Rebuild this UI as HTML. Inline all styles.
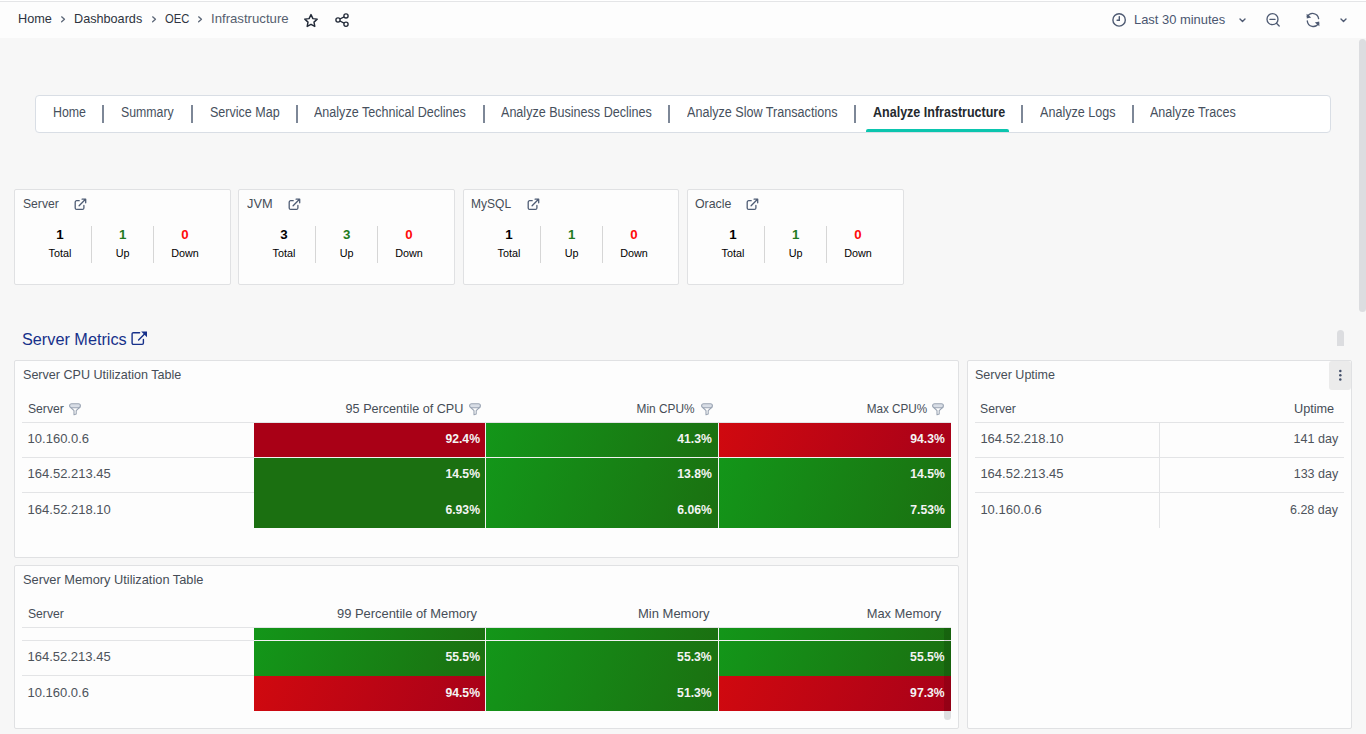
<!DOCTYPE html>
<html><head><meta charset="utf-8"><style>
html,body{margin:0;padding:0;width:1366px;height:734px;overflow:hidden;background:#f7f7f7;font-family:"Liberation Sans",sans-serif;}
.t{position:absolute;white-space:nowrap;}
.b{position:absolute;}
</style></head><body>
<div class="b" style="left:0px;top:0px;width:1366px;height:1px;background:#ffffff"></div>
<div class="b" style="left:0px;top:1px;width:1366px;height:1px;background:#e4e5e7"></div>
<div class="b" style="left:0px;top:2px;width:1366px;height:36px;background:#fdfdfd"></div>
<div class="t" style="top:12.10px;font-size:13px;line-height:13px;color:#2e3440;transform:scaleX(0.9776);left:18.20px;transform-origin:0 0;">Home</div>
<div class="t" style="top:12.10px;font-size:13px;line-height:13px;color:#2e3440;transform:scaleX(0.9730);left:74.10px;transform-origin:0 0;">Dashboards</div>
<div class="t" style="top:12.10px;font-size:13px;line-height:13px;color:#2e3440;transform:scaleX(0.8626);left:164.60px;transform-origin:0 0;">OEC</div>
<div class="t" style="top:12.10px;font-size:13px;line-height:13px;color:#56606f;transform:scaleX(1.0133);left:210.80px;transform-origin:0 0;">Infrastructure</div>
<svg class="b" style="left:61px;top:15px" width="5" height="9" viewBox="0 0 5 9"><path d="M0.65 1.85 L3.45 4.3 L0.65 6.75" fill="none" stroke="#5b6677" stroke-width="1.3" stroke-linecap="round" stroke-linejoin="round"/></svg>
<svg class="b" style="left:152px;top:15px" width="5" height="9" viewBox="0 0 5 9"><path d="M0.65 1.85 L3.45 4.3 L0.65 6.75" fill="none" stroke="#5b6677" stroke-width="1.3" stroke-linecap="round" stroke-linejoin="round"/></svg>
<svg class="b" style="left:198px;top:15px" width="5" height="9" viewBox="0 0 5 9"><path d="M0.65 1.85 L3.45 4.3 L0.65 6.75" fill="none" stroke="#5b6677" stroke-width="1.3" stroke-linecap="round" stroke-linejoin="round"/></svg>
<svg class="b" style="left:303px;top:13px" width="16" height="15" viewBox="0 0 16 15"><path d="M8 1.6 L9.9 5.6 L14.2 6.1 L11 9.1 L11.8 13.4 L8 11.3 L4.2 13.4 L5 9.1 L1.8 6.1 L6.1 5.6 Z" fill="none" stroke="#222a38" stroke-width="1.45" stroke-linejoin="round"/></svg>
<svg class="b" style="left:334px;top:12px" width="16" height="16" viewBox="0 0 16 16"><g fill="none" stroke="#222a38" stroke-width="1.35"><circle cx="4" cy="8" r="2.1"/><circle cx="12" cy="3.9" r="2.1"/><circle cx="12" cy="12.2" r="2.1"/><path d="M5.9 7 L10.1 4.9 M5.9 9 L10.1 11.2"/></g></svg>
<svg class="b" style="left:1111px;top:13px" width="16" height="14" viewBox="0 0 16 14"><g fill="none" stroke="#4e5a72" stroke-width="1.4"><circle cx="8.1" cy="6.9" r="6.2"/><path d="M8.3 3.6 V7.3 H6.1" stroke-linecap="round"/></g></svg>
<div class="t" style="top:12.90px;font-size:13px;line-height:13px;color:#4a5670;transform:scaleX(0.9927);left:1134.40px;transform-origin:0 0;">Last 30 minutes</div>
<svg class="b" style="left:1238.5px;top:17.5px" width="7" height="5" viewBox="0 0 7 5"><path d="M1 1 L3.5 3.5 L6 1" fill="none" stroke="#4e5a72" stroke-width="1.4" stroke-linecap="round" stroke-linejoin="round"/></svg>
<svg class="b" style="left:1339.6px;top:17.5px" width="7" height="5" viewBox="0 0 7 5"><path d="M1 1 L3.5 3.5 L6 1" fill="none" stroke="#4e5a72" stroke-width="1.4" stroke-linecap="round" stroke-linejoin="round"/></svg>
<svg class="b" style="left:1265px;top:12px" width="16" height="16" viewBox="0 0 16 16"><g fill="none" stroke="#4e5a72" stroke-width="1.3" stroke-linecap="round"><circle cx="7.5" cy="7.2" r="5.5"/><path d="M4.9 7.3 H10.1 M11.5 11.3 L14.2 14"/></g></svg>
<svg class="b" style="left:1305px;top:12px" width="16" height="16" viewBox="0 0 16 16"><g fill="none" stroke="#4e5a72" stroke-width="1.35" stroke-linecap="round"><path d="M2.4 4.6 A6 6 0 0 1 13.6 6.6"/><path d="M13.6 11.2 A6 6 0 0 1 2.3 9"/></g><path d="M1.6 1.8 L1.8 6.4 L6.2 5.6 Z M14.4 14.2 L14.2 9.6 L9.8 10.4 Z" fill="#4e5a72"/></svg>
<div class="b" style="left:0px;top:38px;width:1366px;height:696px;background:#f7f7f7"></div>
<div class="b" style="left:1359px;top:39px;width:7px;height:273px;background:#dcdde0;border-radius:4px"></div>
<div class="b" style="left:35px;top:95px;width:1296px;height:38px;background:#ffffff;border:1px solid #d9dee5;border-radius:4px;box-sizing:border-box"></div>
<div class="t" style="top:104.55px;font-size:14px;line-height:14px;color:#46505d;transform:scaleX(0.8837);left:52.70px;transform-origin:0 0;">Home</div>
<div class="t" style="top:104.55px;font-size:14px;line-height:14px;color:#46505d;transform:scaleX(0.8799);left:121.20px;transform-origin:0 0;">Summary</div>
<div class="t" style="top:104.55px;font-size:14px;line-height:14px;color:#46505d;transform:scaleX(0.8946);left:209.70px;transform-origin:0 0;">Service Map</div>
<div class="t" style="top:104.55px;font-size:14px;line-height:14px;color:#46505d;transform:scaleX(0.8962);left:314.20px;transform-origin:0 0;">Analyze Technical Declines</div>
<div class="t" style="top:104.55px;font-size:14px;line-height:14px;color:#46505d;transform:scaleX(0.8972);left:501.10px;transform-origin:0 0;">Analyze Business Declines</div>
<div class="t" style="top:104.55px;font-size:14px;line-height:14px;color:#46505d;transform:scaleX(0.8996);left:686.70px;transform-origin:0 0;">Analyze Slow Transactions</div>
<div class="t" style="top:104.55px;font-size:14px;line-height:14px;color:#24292e;font-weight:bold;transform:scaleX(0.8944);left:872.50px;transform-origin:0 0;">Analyze Infrastructure</div>
<div class="t" style="top:104.55px;font-size:14px;line-height:14px;color:#46505d;transform:scaleX(0.8983);left:1039.50px;transform-origin:0 0;">Analyze Logs</div>
<div class="t" style="top:104.55px;font-size:14px;line-height:14px;color:#46505d;transform:scaleX(0.8965);left:1150.20px;transform-origin:0 0;">Analyze Traces</div>
<div class="b" style="left:102px;top:105px;width:2px;height:18px;background:#7d8797"></div>
<div class="b" style="left:191px;top:105px;width:2px;height:18px;background:#7d8797"></div>
<div class="b" style="left:296px;top:105px;width:2px;height:18px;background:#7d8797"></div>
<div class="b" style="left:483px;top:105px;width:2px;height:18px;background:#7d8797"></div>
<div class="b" style="left:668px;top:105px;width:2px;height:18px;background:#7d8797"></div>
<div class="b" style="left:854px;top:105px;width:2px;height:18px;background:#7d8797"></div>
<div class="b" style="left:1021px;top:105px;width:2px;height:18px;background:#7d8797"></div>
<div class="b" style="left:1132px;top:105px;width:2px;height:18px;background:#7d8797"></div>
<div class="b" style="left:866px;top:129px;width:143px;height:3px;background:#0bc5ae;border-radius:2px 2px 0 0"></div>
<div class="b" style="left:14px;top:189px;width:217px;height:96px;background:#fdfdfd;border:1px solid #e0e1e3;border-radius:2px;box-sizing:border-box"></div>
<div class="t" style="top:197.20px;font-size:13px;line-height:13px;color:#464d57;transform:scaleX(0.9350);left:22.70px;transform-origin:0 0;">Server</div>
<svg class="b" style="left:72.7px;top:196.6px" width="14" height="14" viewBox="0 0 14 14"><g fill="none" stroke="#4f5d75" stroke-width="1.3" stroke-linecap="round" stroke-linejoin="round"><path d="M6.2 3.7 H3.7 A1.5 1.5 0 0 0 2.2 5.2 V10.9 A1.5 1.5 0 0 0 3.7 12.4 H9.4 A1.5 1.5 0 0 0 10.9 10.9 V8.4"/><path d="M6.1 8.7 L12.5 2.3 M9.1 2.2 H12.7 V5.8"/></g></svg>
<div class="t" style="top:227.54px;font-size:13.3px;line-height:13.3px;color:#000000;font-weight:bold;left:56.30px;transform-origin:3.70px 0;">1</div>
<div class="t" style="top:247.66px;font-size:10.8px;line-height:10.8px;color:#000000;left:48.59px;transform-origin:11.41px 0;">Total</div>
<div class="t" style="top:227.54px;font-size:13.3px;line-height:13.3px;color:#217a21;font-weight:bold;left:119.00px;transform-origin:3.70px 0;">1</div>
<div class="t" style="top:247.66px;font-size:10.8px;line-height:10.8px;color:#000000;left:115.80px;transform-origin:6.90px 0;">Up</div>
<div class="t" style="top:227.54px;font-size:13.3px;line-height:13.3px;color:#ff0a0a;font-weight:bold;left:181.30px;transform-origin:3.70px 0;">0</div>
<div class="t" style="top:247.66px;font-size:10.8px;line-height:10.8px;color:#000000;left:171.19px;transform-origin:13.81px 0;">Down</div>
<div class="b" style="left:91px;top:226px;width:1px;height:37px;background:#d6d6d6"></div>
<div class="b" style="left:153px;top:226px;width:1px;height:37px;background:#d6d6d6"></div>
<div class="b" style="left:238px;top:189px;width:217px;height:96px;background:#fdfdfd;border:1px solid #e0e1e3;border-radius:2px;box-sizing:border-box"></div>
<div class="t" style="top:197.20px;font-size:13px;line-height:13px;color:#464d57;transform:scaleX(0.9846);left:246.80px;transform-origin:0 0;">JVM</div>
<svg class="b" style="left:287.0px;top:196.6px" width="14" height="14" viewBox="0 0 14 14"><g fill="none" stroke="#4f5d75" stroke-width="1.3" stroke-linecap="round" stroke-linejoin="round"><path d="M6.2 3.7 H3.7 A1.5 1.5 0 0 0 2.2 5.2 V10.9 A1.5 1.5 0 0 0 3.7 12.4 H9.4 A1.5 1.5 0 0 0 10.9 10.9 V8.4"/><path d="M6.1 8.7 L12.5 2.3 M9.1 2.2 H12.7 V5.8"/></g></svg>
<div class="t" style="top:227.54px;font-size:13.3px;line-height:13.3px;color:#000000;font-weight:bold;left:280.30px;transform-origin:3.70px 0;">3</div>
<div class="t" style="top:247.66px;font-size:10.8px;line-height:10.8px;color:#000000;left:272.59px;transform-origin:11.41px 0;">Total</div>
<div class="t" style="top:227.54px;font-size:13.3px;line-height:13.3px;color:#217a21;font-weight:bold;left:343.00px;transform-origin:3.70px 0;">3</div>
<div class="t" style="top:247.66px;font-size:10.8px;line-height:10.8px;color:#000000;left:339.80px;transform-origin:6.90px 0;">Up</div>
<div class="t" style="top:227.54px;font-size:13.3px;line-height:13.3px;color:#ff0a0a;font-weight:bold;left:405.30px;transform-origin:3.70px 0;">0</div>
<div class="t" style="top:247.66px;font-size:10.8px;line-height:10.8px;color:#000000;left:395.19px;transform-origin:13.81px 0;">Down</div>
<div class="b" style="left:315px;top:226px;width:1px;height:37px;background:#d6d6d6"></div>
<div class="b" style="left:377px;top:226px;width:1px;height:37px;background:#d6d6d6"></div>
<div class="b" style="left:463px;top:189px;width:216px;height:96px;background:#fdfdfd;border:1px solid #e0e1e3;border-radius:2px;box-sizing:border-box"></div>
<div class="t" style="top:197.20px;font-size:13px;line-height:13px;color:#464d57;transform:scaleX(0.9252);left:471.10px;transform-origin:0 0;">MySQL</div>
<svg class="b" style="left:525.5px;top:196.6px" width="14" height="14" viewBox="0 0 14 14"><g fill="none" stroke="#4f5d75" stroke-width="1.3" stroke-linecap="round" stroke-linejoin="round"><path d="M6.2 3.7 H3.7 A1.5 1.5 0 0 0 2.2 5.2 V10.9 A1.5 1.5 0 0 0 3.7 12.4 H9.4 A1.5 1.5 0 0 0 10.9 10.9 V8.4"/><path d="M6.1 8.7 L12.5 2.3 M9.1 2.2 H12.7 V5.8"/></g></svg>
<div class="t" style="top:227.54px;font-size:13.3px;line-height:13.3px;color:#000000;font-weight:bold;left:505.30px;transform-origin:3.70px 0;">1</div>
<div class="t" style="top:247.66px;font-size:10.8px;line-height:10.8px;color:#000000;left:497.59px;transform-origin:11.41px 0;">Total</div>
<div class="t" style="top:227.54px;font-size:13.3px;line-height:13.3px;color:#217a21;font-weight:bold;left:568.00px;transform-origin:3.70px 0;">1</div>
<div class="t" style="top:247.66px;font-size:10.8px;line-height:10.8px;color:#000000;left:564.80px;transform-origin:6.90px 0;">Up</div>
<div class="t" style="top:227.54px;font-size:13.3px;line-height:13.3px;color:#ff0a0a;font-weight:bold;left:630.30px;transform-origin:3.70px 0;">0</div>
<div class="t" style="top:247.66px;font-size:10.8px;line-height:10.8px;color:#000000;left:620.19px;transform-origin:13.81px 0;">Down</div>
<div class="b" style="left:540px;top:226px;width:1px;height:37px;background:#d6d6d6"></div>
<div class="b" style="left:602px;top:226px;width:1px;height:37px;background:#d6d6d6"></div>
<div class="b" style="left:687px;top:189px;width:217px;height:96px;background:#fdfdfd;border:1px solid #e0e1e3;border-radius:2px;box-sizing:border-box"></div>
<div class="t" style="top:197.20px;font-size:13px;line-height:13px;color:#464d57;transform:scaleX(0.9507);left:695.00px;transform-origin:0 0;">Oracle</div>
<svg class="b" style="left:745.3px;top:196.6px" width="14" height="14" viewBox="0 0 14 14"><g fill="none" stroke="#4f5d75" stroke-width="1.3" stroke-linecap="round" stroke-linejoin="round"><path d="M6.2 3.7 H3.7 A1.5 1.5 0 0 0 2.2 5.2 V10.9 A1.5 1.5 0 0 0 3.7 12.4 H9.4 A1.5 1.5 0 0 0 10.9 10.9 V8.4"/><path d="M6.1 8.7 L12.5 2.3 M9.1 2.2 H12.7 V5.8"/></g></svg>
<div class="t" style="top:227.54px;font-size:13.3px;line-height:13.3px;color:#000000;font-weight:bold;left:729.30px;transform-origin:3.70px 0;">1</div>
<div class="t" style="top:247.66px;font-size:10.8px;line-height:10.8px;color:#000000;left:721.59px;transform-origin:11.41px 0;">Total</div>
<div class="t" style="top:227.54px;font-size:13.3px;line-height:13.3px;color:#217a21;font-weight:bold;left:792.00px;transform-origin:3.70px 0;">1</div>
<div class="t" style="top:247.66px;font-size:10.8px;line-height:10.8px;color:#000000;left:788.80px;transform-origin:6.90px 0;">Up</div>
<div class="t" style="top:227.54px;font-size:13.3px;line-height:13.3px;color:#ff0a0a;font-weight:bold;left:854.30px;transform-origin:3.70px 0;">0</div>
<div class="t" style="top:247.66px;font-size:10.8px;line-height:10.8px;color:#000000;left:844.19px;transform-origin:13.81px 0;">Down</div>
<div class="b" style="left:764px;top:226px;width:1px;height:37px;background:#d6d6d6"></div>
<div class="b" style="left:826px;top:226px;width:1px;height:37px;background:#d6d6d6"></div>
<div class="t" style="top:332.16px;font-size:16px;line-height:16px;color:#16308a;transform:scaleX(1.0153);left:21.60px;transform-origin:0 0;">Server Metrics</div>
<svg class="b" style="left:130px;top:330px" width="18" height="16" viewBox="0 0 18 16"><g fill="none" stroke="#16308a" stroke-width="1.4" stroke-linecap="round" stroke-linejoin="round"><path d="M9.6 2.7 H3.4 A1.3 1.3 0 0 0 2.1 4 V13.1 A1.3 1.3 0 0 0 3.4 14.4 H12.1 A1.3 1.3 0 0 0 13.4 13.1 V9.4"/><path d="M8.6 10 L15.3 3.2"/></g><path d="M11.2 1.4 H17 V7.2 Z" fill="#16308a"/></svg>
<div class="b" style="left:1337px;top:330px;width:7px;height:16px;background:#dcdde0;border-radius:3.5px 3.5px 0 0"></div>
<div class="b" style="left:14px;top:360px;width:945px;height:198px;background:#fdfdfd;border:1px solid #e0e1e3;border-radius:2px;box-sizing:border-box"></div>
<div class="t" style="top:368.30px;font-size:13px;line-height:13px;color:#464d57;transform:scaleX(0.9666);left:22.70px;transform-origin:0 0;">Server CPU Utilization Table</div>
<div class="t" style="top:402.20px;font-size:13px;line-height:13px;color:#464d57;transform:scaleX(0.9350);left:27.60px;transform-origin:0 0;">Server</div>
<svg class="b" style="left:68.4px;top:401.8px" width="14" height="14" viewBox="0 0 14 14"><g stroke="#9aa4b3" stroke-width="1.1" stroke-linejoin="round"><path d="M2.2 5 L6 8.6 V12.8 L8.2 11.9 V8.6 L12 5" fill="#fdfdfd"/><rect x="1.6" y="1.7" width="10.8" height="4" rx="2" fill="#d9dee6"/></g></svg>
<div class="t" style="top:402.20px;font-size:13px;line-height:13px;color:#464d57;transform:scaleX(0.9704);left:341.61px;transform-origin:121.39px 0;">95 Percentile of CPU</div>
<svg class="b" style="left:467.5px;top:401.8px" width="14" height="14" viewBox="0 0 14 14"><g stroke="#9aa4b3" stroke-width="1.1" stroke-linejoin="round"><path d="M2.2 5 L6 8.6 V12.8 L8.2 11.9 V8.6 L12 5" fill="#fdfdfd"/><rect x="1.6" y="1.7" width="10.8" height="4" rx="2" fill="#d9dee6"/></g></svg>
<div class="t" style="top:402.20px;font-size:13px;line-height:13px;color:#464d57;transform:scaleX(0.9124);left:631.43px;transform-origin:63.57px 0;">Min CPU%</div>
<svg class="b" style="left:699.5px;top:401.8px" width="14" height="14" viewBox="0 0 14 14"><g stroke="#9aa4b3" stroke-width="1.1" stroke-linejoin="round"><path d="M2.2 5 L6 8.6 V12.8 L8.2 11.9 V8.6 L12 5" fill="#fdfdfd"/><rect x="1.6" y="1.7" width="10.8" height="4" rx="2" fill="#d9dee6"/></g></svg>
<div class="t" style="top:402.20px;font-size:13px;line-height:13px;color:#464d57;transform:scaleX(0.9006);left:859.82px;transform-origin:67.18px 0;">Max CPU%</div>
<svg class="b" style="left:931.2px;top:401.8px" width="14" height="14" viewBox="0 0 14 14"><g stroke="#9aa4b3" stroke-width="1.1" stroke-linejoin="round"><path d="M2.2 5 L6 8.6 V12.8 L8.2 11.9 V8.6 L12 5" fill="#fdfdfd"/><rect x="1.6" y="1.7" width="10.8" height="4" rx="2" fill="#d9dee6"/></g></svg>
<div class="b" style="left:22px;top:422px;width:929px;height:1px;background:#e3e4e6"></div>
<div class="b" style="left:22px;top:457px;width:232px;height:1px;background:#e3e4e6"></div>
<div class="b" style="left:22px;top:492px;width:232px;height:1px;background:#e3e4e6"></div>
<div class="b" style="left:254px;top:423px;width:231px;height:34px;background:#a90016"></div>
<div class="b" style="left:254px;top:458px;width:231px;height:70px;background:#1b7011"></div>
<div class="b" style="left:486px;top:423px;width:232px;height:34px;background:linear-gradient(110deg,#139619 0%,#1b7011 100%)"></div>
<div class="b" style="left:486px;top:458px;width:232px;height:70px;background:linear-gradient(110deg,#139619 0%,#1b7011 100%)"></div>
<div class="b" style="left:719px;top:423px;width:232px;height:34px;background:linear-gradient(110deg,#d0090f 0%,#a80119 100%)"></div>
<div class="b" style="left:719px;top:458px;width:232px;height:70px;background:linear-gradient(110deg,#139619 0%,#1b7011 100%)"></div>
<div class="b" style="left:254px;top:457px;width:697px;height:1px;background:#f2f2f2"></div>
<div class="b" style="left:485px;top:423px;width:1px;height:105px;background:#f2f2f2"></div>
<div class="b" style="left:718px;top:423px;width:1px;height:105px;background:#f2f2f2"></div>
<div class="t" style="top:432.40px;font-size:13px;line-height:13px;color:#4d535b;left:27.60px;transform-origin:0 0;">10.160.0.6</div>
<div class="t" style="top:433.07px;font-size:12.2px;line-height:12.2px;color:#f4f4f4;font-weight:bold;left:445.41px;transform-origin:34.59px 0;">92.4%</div>
<div class="t" style="top:433.07px;font-size:12.2px;line-height:12.2px;color:#f4f4f4;font-weight:bold;left:677.31px;transform-origin:34.59px 0;">41.3%</div>
<div class="t" style="top:433.07px;font-size:12.2px;line-height:12.2px;color:#f4f4f4;font-weight:bold;left:910.31px;transform-origin:34.59px 0;">94.3%</div>
<div class="t" style="top:467.20px;font-size:13px;line-height:13px;color:#4d535b;left:27.60px;transform-origin:0 0;">164.52.213.45</div>
<div class="t" style="top:467.87px;font-size:12.2px;line-height:12.2px;color:#f4f4f4;font-weight:bold;left:445.41px;transform-origin:34.59px 0;">14.5%</div>
<div class="t" style="top:467.87px;font-size:12.2px;line-height:12.2px;color:#f4f4f4;font-weight:bold;left:677.31px;transform-origin:34.59px 0;">13.8%</div>
<div class="t" style="top:467.87px;font-size:12.2px;line-height:12.2px;color:#f4f4f4;font-weight:bold;left:910.31px;transform-origin:34.59px 0;">14.5%</div>
<div class="t" style="top:502.80px;font-size:13px;line-height:13px;color:#4d535b;left:27.60px;transform-origin:0 0;">164.52.218.10</div>
<div class="t" style="top:504.27px;font-size:12.2px;line-height:12.2px;color:#f4f4f4;font-weight:bold;left:445.41px;transform-origin:34.59px 0;">6.93%</div>
<div class="t" style="top:504.27px;font-size:12.2px;line-height:12.2px;color:#f4f4f4;font-weight:bold;left:677.31px;transform-origin:34.59px 0;">6.06%</div>
<div class="t" style="top:504.27px;font-size:12.2px;line-height:12.2px;color:#f4f4f4;font-weight:bold;left:910.31px;transform-origin:34.59px 0;">7.53%</div>
<div class="b" style="left:967px;top:360px;width:385px;height:369px;background:#fdfdfd;border:1px solid #e0e1e3;border-radius:2px;box-sizing:border-box"></div>
<div class="b" style="left:1329px;top:361px;width:22px;height:29px;background:#ebebeb;border-radius:3px"></div>
<svg class="b" style="left:1338px;top:369px" width="5" height="13" viewBox="0 0 5 13"><g fill="#44506a"><circle cx="2.3" cy="2" r="1.25"/><circle cx="2.3" cy="6.3" r="1.25"/><circle cx="2.3" cy="10.6" r="1.25"/></g></svg>
<div class="t" style="top:368.20px;font-size:13px;line-height:13px;color:#464d57;transform:scaleX(0.9630);left:975.00px;transform-origin:0 0;">Server Uptime</div>
<div class="t" style="top:401.80px;font-size:13px;line-height:13px;color:#464d57;transform:scaleX(0.9377);left:980.40px;transform-origin:0 0;">Server</div>
<div class="t" style="top:401.80px;font-size:13px;line-height:13px;color:#464d57;transform:scaleX(0.9763);left:1293.42px;transform-origin:41.18px 0;">Uptime</div>
<div class="b" style="left:975px;top:422px;width:369px;height:1px;background:#e3e4e6"></div>
<div class="b" style="left:975px;top:457px;width:369px;height:1px;background:#e3e4e6"></div>
<div class="b" style="left:975px;top:492px;width:369px;height:1px;background:#e3e4e6"></div>
<div class="b" style="left:1159px;top:423px;width:1px;height:105px;background:#e3e4e6"></div>
<div class="t" style="top:431.80px;font-size:13px;line-height:13px;color:#4d535b;left:980.40px;transform-origin:0 0;">164.52.218.10</div>
<div class="t" style="top:431.80px;font-size:13px;line-height:13px;color:#4d535b;transform:scaleX(0.9663);left:1291.94px;transform-origin:46.26px 0;">141 day</div>
<div class="t" style="top:467.20px;font-size:13px;line-height:13px;color:#4d535b;left:980.40px;transform-origin:0 0;">164.52.213.45</div>
<div class="t" style="top:467.20px;font-size:13px;line-height:13px;color:#4d535b;transform:scaleX(0.9642);left:1291.94px;transform-origin:46.26px 0;">133 day</div>
<div class="t" style="top:503.20px;font-size:13px;line-height:13px;color:#4d535b;left:980.40px;transform-origin:0 0;">10.160.0.6</div>
<div class="t" style="top:503.20px;font-size:13px;line-height:13px;color:#4d535b;transform:scaleX(0.9605);left:1288.33px;transform-origin:49.87px 0;">6.28 day</div>
<div class="b" style="left:14px;top:565px;width:945px;height:164px;background:#fdfdfd;border:1px solid #e0e1e3;border-radius:2px;box-sizing:border-box"></div>
<div class="t" style="top:572.70px;font-size:13px;line-height:13px;color:#464d57;transform:scaleX(0.9844);left:22.50px;transform-origin:0 0;">Server Memory Utilization Table</div>
<div class="t" style="top:607.00px;font-size:13px;line-height:13px;color:#464d57;transform:scaleX(0.9350);left:27.50px;transform-origin:0 0;">Server</div>
<div class="t" style="top:607.00px;font-size:13px;line-height:13px;color:#464d57;transform:scaleX(0.9930);left:336.12px;transform-origin:140.88px 0;">99 Percentile of Memory</div>
<div class="t" style="top:607.00px;font-size:13px;line-height:13px;color:#464d57;left:638.00px;transform-origin:71.50px 0;">Min Memory</div>
<div class="t" style="top:607.00px;font-size:13px;line-height:13px;color:#464d57;transform:scaleX(0.9905);left:866.49px;transform-origin:75.11px 0;">Max Memory</div>
<div class="b" style="left:22px;top:627px;width:929px;height:1px;background:#e3e4e6"></div>
<div class="b" style="left:22px;top:640px;width:232px;height:1px;background:#e3e4e6"></div>
<div class="b" style="left:22px;top:675px;width:232px;height:1px;background:#e3e4e6"></div>
<div class="b" style="left:254px;top:628px;width:231px;height:12px;background:linear-gradient(110deg,#139619 0%,#1b7011 100%)"></div>
<div class="b" style="left:486px;top:628px;width:232px;height:12px;background:linear-gradient(110deg,#139619 0%,#1b7011 100%)"></div>
<div class="b" style="left:719px;top:628px;width:232px;height:12px;background:linear-gradient(110deg,#139619 0%,#1b7011 100%)"></div>
<div class="b" style="left:254px;top:641px;width:231px;height:35px;background:linear-gradient(110deg,#139619 0%,#1b7011 100%)"></div>
<div class="b" style="left:486px;top:641px;width:232px;height:70px;background:linear-gradient(110deg,#139619 0%,#1b7011 100%)"></div>
<div class="b" style="left:719px;top:641px;width:232px;height:35px;background:linear-gradient(110deg,#139619 0%,#1b7011 100%)"></div>
<div class="b" style="left:254px;top:676px;width:231px;height:35px;background:linear-gradient(110deg,#d0090f 0%,#a80119 100%)"></div>
<div class="b" style="left:719px;top:676px;width:232px;height:35px;background:linear-gradient(110deg,#d0090f 0%,#a80119 100%)"></div>
<div class="b" style="left:254px;top:640px;width:697px;height:1px;background:#f2f2f2"></div>
<div class="b" style="left:485px;top:628px;width:1px;height:83px;background:#f2f2f2"></div>
<div class="b" style="left:718px;top:628px;width:1px;height:83px;background:#f2f2f2"></div>
<div class="t" style="top:649.80px;font-size:13px;line-height:13px;color:#4d535b;left:27.50px;transform-origin:0 0;">164.52.213.45</div>
<div class="t" style="top:651.27px;font-size:12.2px;line-height:12.2px;color:#f4f4f4;font-weight:bold;left:445.41px;transform-origin:34.59px 0;">55.5%</div>
<div class="t" style="top:651.27px;font-size:12.2px;line-height:12.2px;color:#f4f4f4;font-weight:bold;left:677.11px;transform-origin:34.59px 0;">55.3%</div>
<div class="t" style="top:651.27px;font-size:12.2px;line-height:12.2px;color:#f4f4f4;font-weight:bold;left:910.11px;transform-origin:34.59px 0;">55.5%</div>
<div class="t" style="top:686.40px;font-size:13px;line-height:13px;color:#4d535b;left:27.50px;transform-origin:0 0;">10.160.0.6</div>
<div class="t" style="top:687.07px;font-size:12.2px;line-height:12.2px;color:#f4f4f4;font-weight:bold;left:445.41px;transform-origin:34.59px 0;">94.5%</div>
<div class="t" style="top:687.07px;font-size:12.2px;line-height:12.2px;color:#f4f4f4;font-weight:bold;left:677.11px;transform-origin:34.59px 0;">51.3%</div>
<div class="t" style="top:687.07px;font-size:12.2px;line-height:12.2px;color:#f4f4f4;font-weight:bold;left:910.11px;transform-origin:34.59px 0;">97.3%</div>
<div class="b" style="left:944px;top:628px;width:7px;height:83px;background:rgba(0,0,0,0.12)"></div>
<div class="b" style="left:944px;top:711px;width:7px;height:9px;background:#dedfe1;border-radius:0 0 3.5px 3.5px"></div>
</body></html>
